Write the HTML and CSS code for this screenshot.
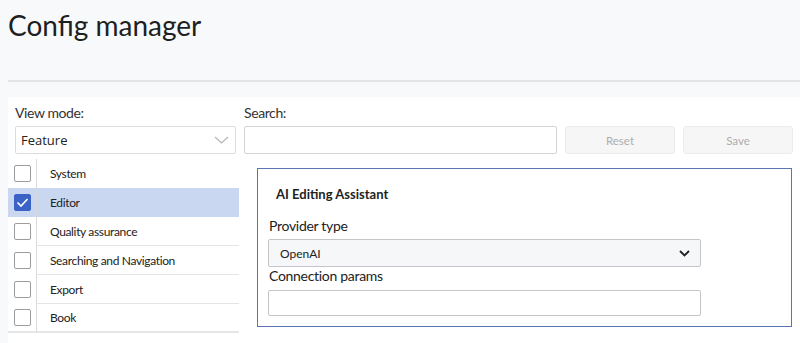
FILE: index.html
```html
<!DOCTYPE html>
<html lang="en">

<head>
  <meta charset="UTF-8">
  <meta name="viewport" content="width=device-width, initial-scale=1.0">
  <title>Config manager</title>
  <link rel="stylesheet" href="styles.css">
</head>

<body>
  <div class="page">
    <header class="page-header">
      <h1 class="page-title">Config manager</h1>
    </header>

    <main class="main">
      <div class="toolbar">
        <label class="field-label">View mode:</label>
        <label class="field-label">Search:</label>
        <span></span>
        <span></span>

        <div class="select">
          <span>Feature</span>
          <svg class="select-arrow" width="15" height="8" viewBox="0 0 15 8">
            <polyline points="1,1 7.5,7 14,1" fill="none" stroke="#b5b5b5" stroke-width="1.2" />
          </svg>
        </div>
        <input class="search-input" type="text">
        <button class="btn" disabled>Reset</button>
        <button class="btn" disabled>Save</button>
      </div>

      <div class="content">
        <ul class="feature-list">
          <li class="feature-item">
            <span class="check-cell"><span class="checkbox"></span></span>
            <span class="feature-name">System</span>
          </li>
          <li class="feature-item selected">
            <span class="check-cell">
              <span class="checkbox checked">
                <svg width="13" height="11" viewBox="0 0 13 11">
                  <polyline points="1.5,5.5 5,9 11.5,2" fill="none" stroke="#fff" stroke-width="1.6" />
                </svg>
              </span>
            </span>
            <span class="feature-name">Editor</span>
          </li>
          <li class="feature-item">
            <span class="check-cell"><span class="checkbox"></span></span>
            <span class="feature-name">Quality assurance</span>
          </li>
          <li class="feature-item">
            <span class="check-cell"><span class="checkbox"></span></span>
            <span class="feature-name">Searching and Navigation</span>
          </li>
          <li class="feature-item">
            <span class="check-cell"><span class="checkbox"></span></span>
            <span class="feature-name">Export</span>
          </li>
          <li class="feature-item last">
            <span class="check-cell"><span class="checkbox"></span></span>
            <span class="feature-name">Book</span>
          </li>
        </ul>

        <section class="feature-panel">
          <h3 class="panel-title">AI Editing Assistant</h3>
          <label class="panel-label">Provider type</label>
          <div class="panel-select">
            <span>OpenAI</span>
            <svg width="11" height="7" viewBox="0 0 11 7">
              <polyline points="1,1 5.5,5.5 10,1" fill="none" stroke="#222" stroke-width="1.8" />
            </svg>
          </div>
          <label class="panel-label">Connection params</label>
          <input class="panel-input" type="text">
        </section>
      </div>
    </main>
  </div>
</body>

</html>
```

FILE: styles.css
```css
* {
  margin: 0;
  padding: 0;
  box-sizing: border-box;
}

html,
body {
  height: 100%;
  overflow: hidden;
}

body {
  background: #f8f9fb;
  font-family: 'Lato', 'Liberation Sans', sans-serif;
  color: #222;
}

.page {
  padding-left: 8px;
  height: 100%;
  display: flex;
  flex-direction: column;
}

.page-header {
  height: 82px;
  border-bottom: 2px solid #e3e4e7;
  margin-bottom: 15px;
}

.page-title {
  font-size: 28px;
  font-weight: 400;
  line-height: 34px;
  padding-top: 8px;
  color: #1d1f22;
}

.main {
  flex: 1;
  background: #fff;
}

/* toolbar: labels on first row, controls below */
.toolbar {
  display: grid;
  grid-template-columns: 221px 313px 110px 110px;
  column-gap: 8px;
  row-gap: 5px;
  padding: 7px 7px 0 7px;
}

.field-label {
  font-size: 14px;
  line-height: 17px;
  letter-spacing: -0.4px;
  color: #333;
}

.select {
  height: 28px;
  border: 1px solid #dcdcdc;
  border-radius: 2px;
  display: flex;
  align-items: center;
  justify-content: space-between;
  padding: 0 6px 0 5px;
  font-family: 'Open Sans', 'Liberation Sans', sans-serif;
  font-size: 13px;
  color: #222;
}

.search-input {
  height: 28px;
  border: 1px solid #d4d4d4;
  border-radius: 2px;
  background: #fff;
}

.btn {
  height: 28px;
  border: 1px solid #ececec;
  border-radius: 3px;
  background: #f6f6f6;
  color: #adadad;
  font-family: 'Lato', sans-serif;
  font-size: 11.5px;
}

.content {
  display: flex;
  align-items: flex-start;
  margin-top: 5px;
}

.feature-list {
  list-style: none;
  width: 231px;
}

.feature-item {
  display: flex;
  height: 29px;
}

.feature-item.selected {
  background: #c9d7f1;
}

.check-cell {
  width: 29px;
  border-right: 1px solid #d9d9d9;
  display: flex;
  align-items: center;
  justify-content: center;
}

.checkbox {
  width: 17px;
  height: 17px;
  border: 1.5px solid #9c9c9c;
  border-radius: 2px;
  background: #fff;
  display: flex;
  align-items: center;
  justify-content: center;
}

.checkbox.checked {
  background: #3b63c5;
  border-color: #3b63c5;
}

.feature-name {
  flex: 1;
  display: flex;
  align-items: center;
  padding-left: 13px;
  font-size: 12px;
  letter-spacing: -0.35px;
  color: #222;
  border-bottom: 1px solid #e4e4e4;
}

.feature-item:first-child .feature-name,
.feature-item.selected .feature-name {
  border-bottom-color: transparent;
}

.feature-item.last {
  border-bottom: 2px solid #e6e6e6;
}

.feature-item.last .feature-name {
  border-bottom: none;
}

.feature-panel {
  margin-left: 18px;
  margin-top: 9px;
  width: 535px;
  border: 1px solid #5b75b2;
  padding: 17px 10px 10px 10px;
  display: flex;
  flex-direction: column;
}

.panel-title {
  font-size: 13px;
  font-weight: 700;
  line-height: 17px;
  padding-left: 8px;
  margin-bottom: 14px;
  color: #1d1f22;
}

.panel-label {
  font-size: 14px;
  line-height: 17px;
  letter-spacing: -0.3px;
  padding-left: 1px;
  color: #222;
}

.panel-select {
  width: 433px;
  height: 28px;
  margin-top: 5px;
  border: 1px solid #c3c5c9;
  border-radius: 2px;
  background: #f6f7f9;
  display: flex;
  align-items: center;
  justify-content: space-between;
  padding: 0 10px 0 11px;
  font-size: 12px;
  color: #222;
}

.panel-input {
  width: 433px;
  height: 26px;
  margin-top: 6px;
  border: 1px solid #c3c5c9;
  border-radius: 2px;
  background: #fff;
}
```
